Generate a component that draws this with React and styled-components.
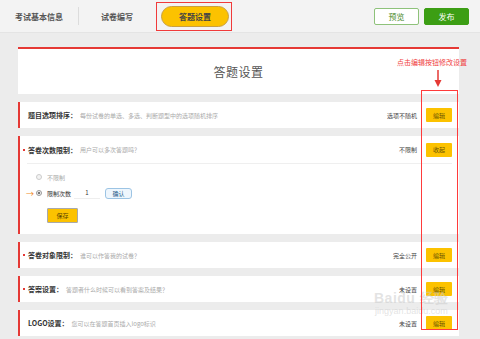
import React from "react";
import styled, { createGlobalStyle } from "styled-components";

const GlobalStyle = createGlobalStyle`
  html, body {
    margin: 0;
    padding: 0;
  }
  body {
    font-family: "Noto Sans CJK SC", "Liberation Sans", sans-serif;
    color: #333;
  }
`;

const Page = styled.div`
  position: relative;
  width: 480px;
  height: 339px;
  overflow: hidden;
  background-color: #ececec;
`;

const TopBar = styled.div`
  display: flex;
  align-items: center;
  height: 33px;
  padding: 0 11px 0 0;
  background-color: #f3f3f3;
  border-bottom: 1px solid #e4e4e4;
  box-sizing: border-box;
`;

const Tab = styled.div`
  display: flex;
  align-items: center;
  justify-content: center;
  height: 18px;
  padding: 0 ${(p) => p.$pad || 15}px;
  font-size: 8px;
  font-weight: bold;
  color: #555;
  border-right: ${(p) => (p.$sep ? "1px solid #dcdcdc" : "none")};
`;

const ActiveTab = styled.div`
  position: relative;
  display: flex;
  align-items: center;
  justify-content: center;
  width: 68px;
  height: 21px;
  margin-left: 6px;
  border-radius: 11px;
  background-color: #fcc200;
  border: 1px solid #c9a040;
  box-sizing: border-box;
  font-size: 8px;
  font-weight: bold;
  color: #444;

  &::after {
    content: "";
    position: absolute;
    left: -6px;
    top: -5px;
    right: -4px;
    bottom: -5px;
    border: 1px solid #f03a3a;
  }
`;

const Spacer = styled.div`
  flex: 1;
`;

const TopButton = styled.div`
  display: flex;
  align-items: center;
  justify-content: center;
  width: 45px;
  height: 17px;
  margin-left: 5px;
  border-radius: 2px;
  box-sizing: border-box;
  font-size: 8px;
  color: ${(p) => (p.$primary ? "#fff" : "#4a8a2a")};
  background-color: ${(p) => (p.$primary ? "#3c9e14" : "#fff")};
  border: 1px solid ${(p) => (p.$primary ? "#3c9e14" : "#8ec27a")};
`;

const Content = styled.div`
  display: flex;
  flex-direction: column;
  gap: 8px;
  padding: 14px 21px 0 18px;
`;

const HeaderCard = styled.div`
  display: flex;
  align-items: center;
  justify-content: center;
  height: 47px;
  background-color: #fff;
  border-top: 2px solid #e53935;
  box-sizing: border-box;
  font-size: 12px;
  color: #555;
  letter-spacing: 0.5px;
`;

const Section = styled.div`
  background-color: #fff;
  border-left: 2px solid #e53935;
`;

const RowHead = styled.div`
  position: relative;
  display: flex;
  align-items: center;
  height: ${(p) => p.$h || 26}px;
  padding: 0 7px 0 8px;
`;

const Dot = styled.span`
  position: absolute;
  left: 3px;
  top: 50%;
  width: 2px;
  height: 2px;
  margin-top: -1px;
  background-color: #e53935;
`;

const Title = styled.span`
  font-size: 7px;
  font-weight: bold;
  color: #333;
  white-space: nowrap;
`;

const Desc = styled.span`
  margin-left: 3px;
  font-size: 6px;
  color: #aaa;
  white-space: nowrap;
`;

const Status = styled.span`
  margin-left: auto;
  font-size: 6px;
  color: #444;
  white-space: nowrap;
`;

const SmallButton = styled.div`
  display: flex;
  align-items: center;
  justify-content: center;
  width: 26px;
  height: 14px;
  margin-left: 9px;
  border-radius: 1px;
  background-color: #fcc200;
  font-size: 6px;
  color: #6a5200;
`;

const Divider = styled.div`
  height: 1px;
  margin: 0 7px 0 7px;
  background-color: #efefef;
`;

const Body = styled.div`
  display: flex;
  flex-direction: column;
  padding: 5px 0 11px 0;
`;

const OptionRow = styled.div`
  position: relative;
  display: flex;
  align-items: center;
  height: 16px;
  padding-left: 16px;
  font-size: 6px;
  color: ${(p) => (p.$muted ? "#aaa" : "#333")};
`;

const Pointer = styled.span`
  position: absolute;
  left: 6px;
  font-size: 8px;
  color: #f08a1c;
`;

const Radio = styled.span`
  width: 4px;
  height: 4px;
  margin-right: 5px;
  border-radius: 50%;
  border: 1px solid ${(p) => (p.$on ? "#999" : "#ccc")};
  background: ${(p) => (p.$on ? "radial-gradient(#777 40%, #eee 45%)" : "#f3f3f3")};
`;

const CountInput = styled.span`
  display: inline-flex;
  justify-content: center;
  width: 26px;
  margin-left: 3px;
  padding-bottom: 1px;
  border-bottom: 1px solid #eee;
  font-size: 6px;
  color: #333;
`;

const ConfirmButton = styled.span`
  display: inline-flex;
  align-items: center;
  justify-content: center;
  width: 27px;
  height: 11px;
  margin-left: 5px;
  border: 1px solid #9cc4e4;
  border-radius: 3px;
  background-color: #eef6fd;
  box-sizing: border-box;
  font-size: 6px;
  color: #2a5f8a;
`;

const SaveButton = styled.div`
  display: flex;
  align-items: center;
  justify-content: center;
  width: 31px;
  height: 15px;
  margin: 7px 0 0 27px;
  border: 1px solid #a9a9a9;
  border-radius: 1px;
  background-color: #fcc200;
  box-sizing: border-box;
  font-size: 6px;
  color: #5a4500;
`;

const Note = styled.div`
  position: absolute;
  left: 397px;
  top: 57px;
  font-size: 7px;
  color: #f04040;
  white-space: nowrap;
`;

const Arrow = styled.svg`
  position: absolute;
  left: 434px;
  top: 70px;
`;

const Frame = styled.div`
  position: absolute;
  left: 421px;
  top: 90px;
  width: 37px;
  height: 240px;
  border: 1px solid #ff3b3b;
  box-sizing: border-box;
  z-index: 2;
`;

const Watermark = styled.div`
  position: absolute;
  left: 374px;
  top: 291px;
  display: flex;
  flex-direction: column;
  align-items: center;
  color: rgba(200, 200, 200, 0.5);
  font-family: "Liberation Sans", sans-serif;
  pointer-events: none;
`;

const WmTop = styled.div`
  font-size: 14px;
  font-weight: bold;
  letter-spacing: 0.5px;
  line-height: 15px;
`;

const WmBottom = styled.div`
  font-size: 9px;
  line-height: 10px;
`;

const rows = [
  {
    title: "题目选项排序：",
    desc: "每份试卷的单选、多选、判断题型中的选项随机排序",
    status: "选项不随机",
    action: "编辑",
  },
  {
    title: "答卷次数限制：",
    desc: "用户可以多次答题吗？",
    status: "不限制",
    action: "收起",
    star: true,
    open: true,
  },
  {
    title: "答卷对象限制：",
    desc: "谁可以作答我的试卷？",
    status: "完全公开",
    action: "编辑",
    star: true,
  },
  {
    title: "答案设置：",
    desc: "答题者什么时候可以看到答案及结果？",
    status: "未设置",
    action: "编辑",
    star: true,
  },
  {
    title: "LOGO设置：",
    desc: "您可以在答题首页插入logo标识",
    status: "未设置",
    action: "编辑",
  },
];

function App() {
  return (
    <Page>
      <GlobalStyle />
      <TopBar>
        <Tab $sep>考试基本信息</Tab>
        <Tab $pad={22}>试卷编写</Tab>
        <ActiveTab>答题设置</ActiveTab>
        <Spacer />
        <TopButton>预览</TopButton>
        <TopButton $primary>发布</TopButton>
      </TopBar>

      <Content>
        <HeaderCard>答题设置</HeaderCard>
        {rows.map((row, i) => (
          <Section key={i}>
            <RowHead $h={row.open ? 27 : 26}>
              {row.star && <Dot />}
              <Title>{row.title}</Title>
              <Desc>{row.desc}</Desc>
              <Status>{row.status}</Status>
              <SmallButton>{row.action}</SmallButton>
            </RowHead>
            {row.open && (
              <>
                <Divider />
                <Body>
                  <OptionRow $muted>
                    <Radio />
                    不限制
                  </OptionRow>
                  <OptionRow>
                    <Pointer>→</Pointer>
                    <Radio $on />
                    限制次数
                    <CountInput>1</CountInput>
                    <ConfirmButton>确认</ConfirmButton>
                  </OptionRow>
                  <SaveButton>保存</SaveButton>
                </Body>
              </>
            )}
          </Section>
        ))}
      </Content>

      <Note>点击编辑按钮修改设置</Note>
      <Arrow width="8" height="18" viewBox="0 0 8 18">
        <line x1="4" y1="0" x2="4" y2="12" stroke="#e53935" strokeWidth="1.5" />
        <polygon points="0.5,10 7.5,10 4,17" fill="#e53935" />
      </Arrow>
      <Frame />

      <Watermark>
        <WmTop>Baidu 经验</WmTop>
        <WmBottom>jingyan.baidu.com</WmBottom>
      </Watermark>
    </Page>
  );
}

export default App;
